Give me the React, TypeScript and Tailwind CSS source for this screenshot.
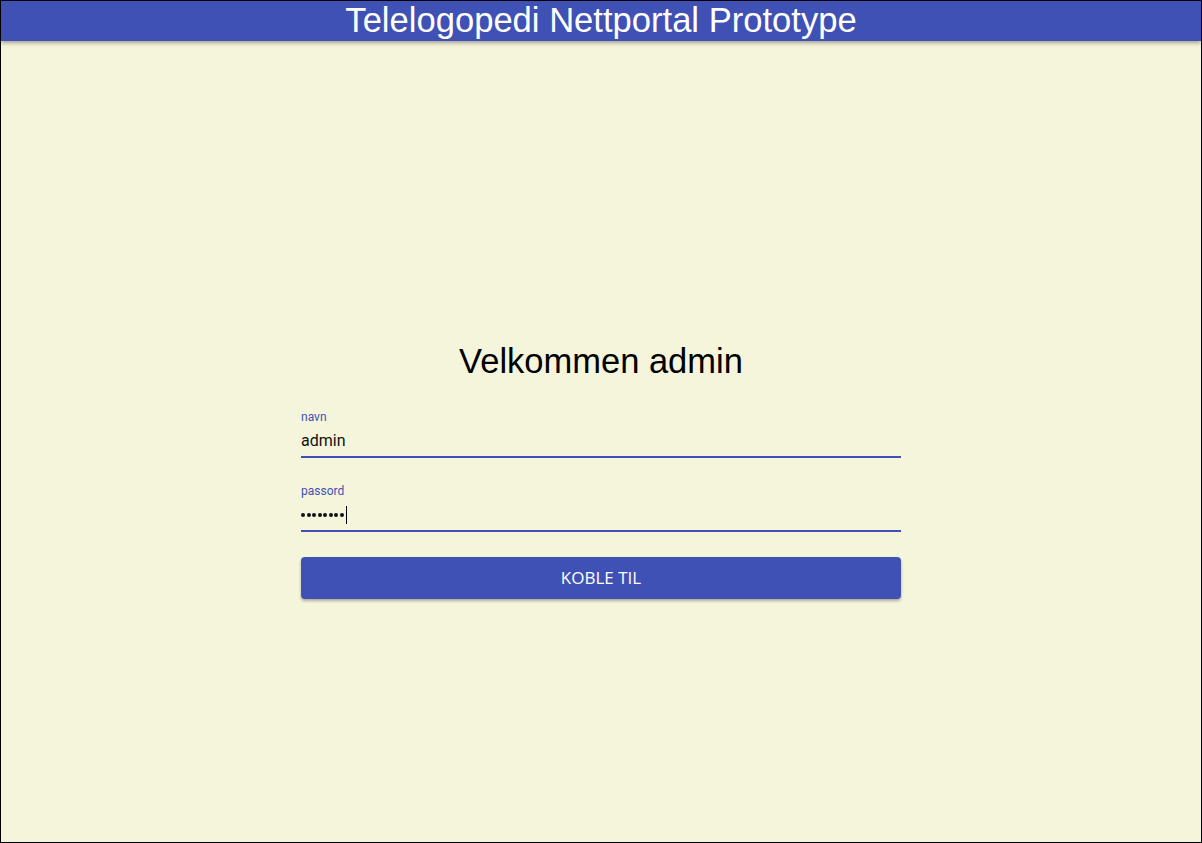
import React from "react";

export default function App() {
  return (
    <div className="w-[1202px] h-[843px] box-border border border-black bg-[#f5f5dc] flex flex-col overflow-hidden">
      <div className="h-[40px] bg-[#3f51b5] shadow-[0_2px_4px_rgba(0,0,0,0.35)] flex items-center justify-center shrink-0 relative z-10">
        <span className="text-white text-[34.6px] leading-[40px] font-['Liberation_Sans',Arial,sans-serif] mt-[-3px]">
          Telelogopedi Nettportal Prototype
        </span>
      </div>
      <div className="flex flex-col items-center pt-[300px]">
        <h1 className="text-[34.5px] leading-[40px] text-black font-['Liberation_Sans',Arial,sans-serif] mb-[29px]">
          Velkommen admin
        </h1>
        <div className="w-[600px] flex flex-col font-['Roboto',sans-serif]">
          <label className="text-[12px] leading-[14px] text-[#3f51b5]">navn</label>
          <div className="h-[34px] flex items-end pb-[6px] border-b-2 border-[#3f51b5] text-[16px] leading-[19px] text-[#111]">
            admin
          </div>
          <label className="mt-[26px] text-[12px] leading-[14px] text-[#3f51b5]">passord</label>
          <div className="h-[34px] flex items-end pb-[6px] border-b-2 border-[#3f51b5] text-[16px] leading-[19px] text-[#111]">
            <span className="flex items-center h-[19px] gap-[1.5px]">
              {Array.from({ length: 8 }).map((_, i) => (
                <span key={i} className="inline-block w-[4px] h-[4px] rounded-full bg-[#111]" />
              ))}
              <span className="inline-block w-px h-[18px] bg-black ml-[1px]" />
            </span>
          </div>
          <button className="mt-[25px] h-[42px] w-full rounded-[4px] bg-[#3f51b5] text-white text-[17px] font-['Open_Sans',sans-serif] shadow-[0_2px_3px_rgba(0,0,0,0.3)]">
            KOBLE TIL
          </button>
        </div>
      </div>
    </div>
  );
}
